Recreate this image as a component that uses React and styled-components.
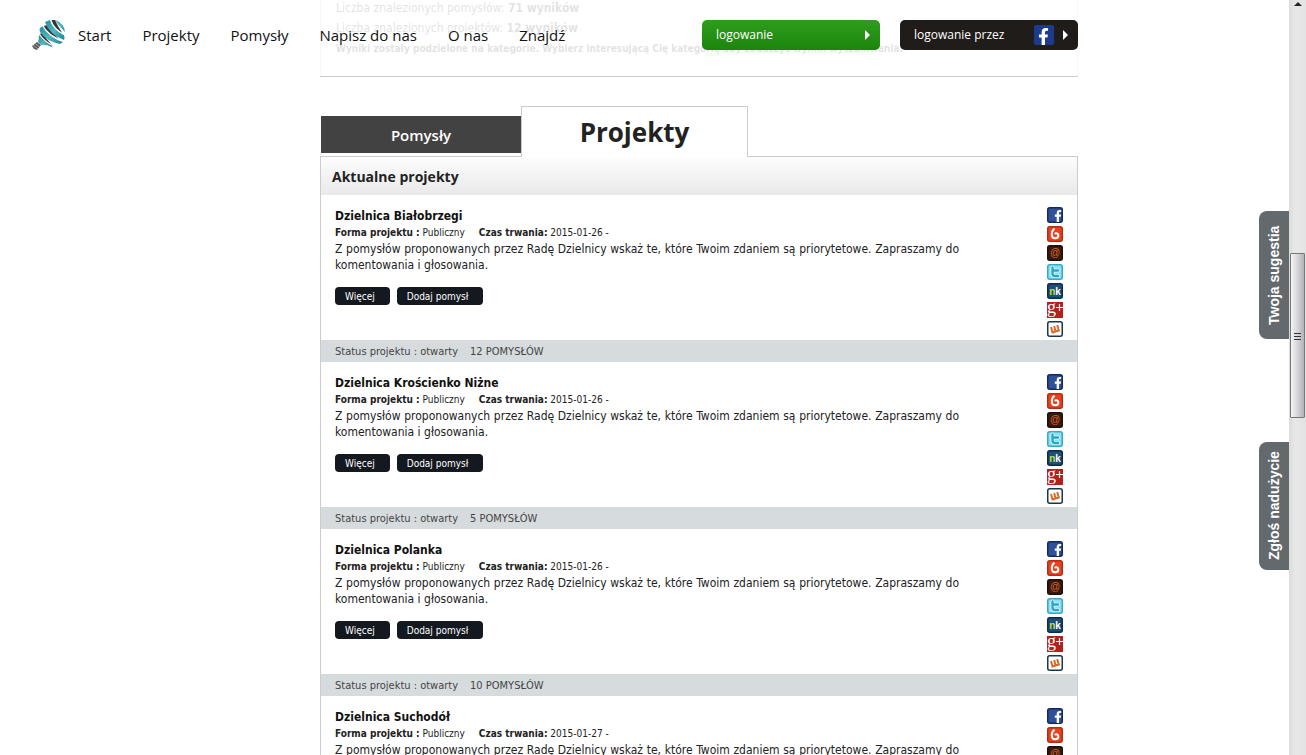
import React from "react";
import styled, { createGlobalStyle } from "styled-components";
import { FaFacebookF } from "react-icons/fa";

const sans = `"DejaVu Sans Condensed", "DejaVu Sans", sans-serif`;
const display = `"Open Sans", "Noto Sans", sans-serif`;

const GlobalStyle = createGlobalStyle`
	* {
		box-sizing: border-box;
	}
	body {
		margin: 0;
		background: #fff;
		color: #222;
		font: 12px/16px ${sans};
		overflow: hidden;
	}
	a {
		color: inherit;
		text-decoration: none;
	}
	button {
		border: 0;
		cursor: pointer;
	}
`;

const Window = styled.div`
	display: flex;
	height: 100vh;
	overflow: hidden;
`;

const Page = styled.div`
	position: relative;
	flex: 1;
	overflow: hidden;
`;

/* header */

const Header = styled.header`
	position: absolute;
	z-index: 2;
	top: 0;
	left: 0;
	right: 0;
	height: 76px;
	padding: 0 211px 6px 32px;
	display: flex;
	align-items: center;
	background: rgba(255, 255, 255, 0.85);
`;

const Logo = styled.a`
	display: block;
	width: 34px;
	height: 32px;
	margin-right: 12px;
`;

const Nav = styled.nav`
	flex: 1;
	display: flex;
	gap: 31px;
	font: 15px/20px ${display};
	color: #111;
	white-space: nowrap;
`;

const LoginButton = styled.button`
	width: 178px;
	height: 30px;
	margin-left: 20px;
	padding: 0 10px 0 14px;
	display: flex;
	align-items: center;
	gap: 9px;
	border-radius: 5px;
	background: ${props =>
		props.$green ? "linear-gradient(#2e9d1d, #1c850c)" : "#1f1c1a"};
	color: #fff;
	font: 12px/16px ${display};
	text-align: left;
`;

const LoginLabel = styled.span`
	flex: 1;
`;

const FacebookBadge = styled.span`
	display: flex;
	align-items: flex-end;
	justify-content: flex-end;
	width: 20px;
	height: 20px;
	padding-right: 2px;
	border-radius: 2px;
	background: #1c3b8f;
	font-size: 17px;
`;

/* content */

const Content = styled.main`
	margin: 0 211px 0 320px;
`;

const Summary = styled.section`
	height: 77px;
	padding-left: 15px;
	border: 1px solid #ccc;
	border-top: 0;
	color: #444;
`;

const SummaryLine = styled.p`
	margin: 0;
	height: 20px;
	line-height: 17px;
	font-size: ${props => (props.$small ? "10px" : "12px")};
	font-weight: ${props => (props.$small ? "bold" : "normal")};
	white-space: nowrap;
`;

const Tabs = styled.div`
	display: flex;
	align-items: flex-start;
	margin-top: 29px;
	padding-left: 1px;
`;

const Tab = styled.button`
	width: 200px;
	height: 37px;
	margin-top: 10px;
	background: #424242;
	color: #fff;
	font: 600 15px/20px ${display};
`;

const ActiveTab = styled.button`
	position: relative;
	width: 227px;
	height: 51px;
	margin-bottom: -1px;
	border: solid #ccc;
	border-width: 1px 1px 0;
	background: #fff;
	color: #222;
	font: bold 26px/32px ${display};
`;

const Panel = styled.section`
	border: 1px solid #ccc;
`;

const PanelTitle = styled.h2`
	margin: 0;
	height: 38px;
	padding: 10px 11px;
	background: linear-gradient(#fdfdfd, #e9e9ea);
	font: bold 14px/20px ${display};
`;

const Project = styled.article`
	height: 145px;
	padding: 12px 14px 0;
	display: flex;
	gap: 88px;
`;

const ProjectText = styled.div`
	flex: 1;
`;

const ProjectName = styled.h3`
	margin: 0;
	font-size: 12px;
	line-height: 18px;
	color: #111;
`;

const Meta = styled.div`
	display: flex;
	gap: 14px;
	font-size: 10px;
	line-height: 16px;
`;

const Description = styled.p`
	margin: 0 0 14px;
	text-align: justify;
`;

const Actions = styled.div`
	display: flex;
	gap: 7px;
`;

const Action = styled.button`
	height: 18px;
	padding: 1px 15px 0 10px;
	border-radius: 4px;
	background: #14181f;
	color: #fff;
	font: 10px/17px ${sans};
`;

const Shares = styled.div`
	display: flex;
	flex-direction: column;
	gap: 3px;
`;

const Share = styled.a`
	width: 16px;
	height: 16px;

	svg {
		display: block;
	}
`;

const Status = styled.div`
	display: flex;
	gap: 12px;
	padding: 2px 14px 0;
	background: #d6dcde;
	color: #444;
	font-size: 11px;
	line-height: 20px;
`;

/* right edge */

const SideTab = styled.a`
	position: absolute;
	top: ${props => props.$top}px;
	right: 0;
	width: 30px;
	height: 128px;
	border-radius: 0 8px 8px 0;
	background: #63696c;
	color: #fff;
	font: bold 14px/30px "Liberation Sans", Arial, sans-serif;
	text-align: center;
	writing-mode: vertical-rl;
	transform: rotate(180deg);
`;

const ScrollTrack = styled.div`
	width: 17px;
	padding: 2px 1px 0;
	display: flex;
	flex-direction: column;
	align-items: center;
	background: linear-gradient(90deg, #dcdcdc, #e8e8e8 40%, #e3e3e3);
`;

const ScrollArrow = styled.div`
	border: solid transparent;
	border-width: 0 4px 4px;
	border-bottom-color: #222;
`;

const ScrollThumb = styled.div`
	width: 15px;
	height: 165px;
	margin-top: 247px;
	display: flex;
	align-items: center;
	justify-content: center;
	border: 1px solid #777;
	border-radius: 1px;
	background: linear-gradient(90deg, #f4f4f4, #dcdce0 40%, #b2b2b8);
`;

const Bulb = () => (
	<svg width="34" height="32" viewBox="0 0 34 32" aria-hidden="true">
		<defs>
			<linearGradient id="teal" x1="0" y1="0" x2="1" y2="1">
				<stop offset="0" stopColor="#1f8f9b" />
				<stop offset="0.5" stopColor="#4fb9c1" />
				<stop offset="1" stopColor="#1c8591" />
			</linearGradient>
		</defs>
		<path d="M0 27 L5 23 L9 26 L5 31 L2 30Z" fill="#5c5a5e" />
		<path d="M1 26 L6 30 M3 24.500 L8 28" stroke="#a5a3a6" />
		<path d="M7 16 Q7 20 6 23 L9 26 Q14 25 20 28 L21 26 Q12 23 7 16Z" fill="url(#teal)" />
		<path d="M7 15 Q9 22 20 26 Q14 20 11 14Z" fill="#38363b" />
		<path d="M8 9 Q7 11 8 13 Q14 22 28 25 L31 23 Q17 19 11 7Z" fill="url(#teal)" />
		<path d="M11 7 Q15 16 27 20 Q19 12 16 6Z" fill="#38363b" />
		<path d="M13 3 L18 1 Q21 11 32 16 Q33 19 32 21 Q17 15 13 3Z" fill="url(#teal)" />
		<path d="M19 1 Q21 9 31 15 Q26 8 23 1Z" fill="#38363b" />
		<path d="M23 1 Q32 4 33 13 Q28 8 23 1Z" fill="url(#teal)" />
		<path
			d="M7 14.500 Q12 23 22 27 M10.500 6 Q15 16 31 22 M18.500 0 Q21 10 33 16"
			fill="none"
			stroke="#fff"
			strokeWidth="1.2"
		/>
	</svg>
);

const Arrow = () => (
	<svg width="5" height="10" viewBox="0 0 5 10" aria-hidden="true">
		<path d="M0 0 L5 5 L0 10Z" fill="#fff" />
	</svg>
);

const Tile = ({ fill, stroke, children }) => (
	<svg width="16" height="16" viewBox="0 0 16 16" aria-hidden="true">
		<rect
			x="0.75"
			y="0.75"
			width="14.5"
			height="14.5"
			rx="2"
			fill={fill}
			stroke={stroke}
			strokeWidth="1.5"
		/>
		{children}
	</svg>
);

const shares = [
	{
		name: "Facebook",
		icon: (
			<Tile fill="#30509a" stroke="#14285f">
				<FaFacebookF x="5" y="3" width="9" height="12" color="#fff" />
			</Tile>
		)
	},
	{
		name: "Blip",
		icon: (
			<Tile fill="#e8421f" stroke="#b82b10">
				<path
					d="M7.500 2.500 Q4.500 5 4.800 9 Q5.200 12.500 8.200 12.300 Q11.500 12 11.300 9.200 Q11 6.600 7.500 7.600"
					fill="none"
					stroke="#fff"
					strokeWidth="2"
				/>
			</Tile>
		)
	},
	{
		name: "E-mail",
		icon: (
			<Tile fill="#3a1a10" stroke="#1d0f0b">
				<text
					x="8"
					y="11"
					fontSize="10"
					fontFamily="Liberation Sans"
					textAnchor="middle"
					fill="#d9642a"
				>
					@
				</text>
			</Tile>
		)
	},
	{
		name: "Twitter",
		icon: (
			<Tile fill="#8be0f5" stroke="#36a9c8">
				<path
					d="M5.5 3.5 V9.5 Q5.5 12 8 12 H11 M5.5 6.5 H11"
					fill="none"
					stroke="#e8fafe"
					strokeWidth="4"
					strokeLinecap="round"
				/>
				<path
					d="M5.5 3.5 V9.5 Q5.5 12 8 12 H11 M5.5 6.5 H11"
					fill="none"
					stroke="#2ba5c9"
					strokeWidth="2.4"
					strokeLinecap="round"
				/>
			</Tile>
		)
	},
	{
		name: "Nasza Klasa",
		icon: (
			<Tile fill="#1c5078" stroke="#0d2a4c">
				<text
					x="8"
					y="12"
					fontSize="10"
					fontWeight="bold"
					fontFamily="Liberation Sans"
					textAnchor="middle"
					fill="#fff"
				>
					<tspan fill="#c8dc3c">n</tspan>k
				</text>
			</Tile>
		)
	},
	{
		name: "Google+",
		icon: (
			<svg width="16" height="16" viewBox="0 0 16 16" aria-hidden="true">
				<rect width="16" height="16" fill="#b3211c" />
				<text
					x="0"
					y="11"
					fontSize="18"
					fontFamily="Liberation Serif"
					fill="#fff"
				>
					g
				</text>
				<path d="M9 5.500 H16 M12.500 2 V9" stroke="#fff" strokeWidth="1.2" />
			</svg>
		)
	},
	{
		name: "Wykop",
		icon: (
			<Tile fill="#fff" stroke="#173650">
				<path
					d="M4 6 L5.5 11.5 L8.5 10.5 L7.2 5 M8.5 10.500 L11.800 9.500 L10.2 4"
					fill="none"
					stroke="#dd6a24"
					strokeWidth="2"
				/>
			</Tile>
		)
	}
];

const projects = [
	{ name: "Dzielnica Białobrzegi", date: "2015-01-26", ideas: 12 },
	{ name: "Dzielnica Krościenko Niżne", date: "2015-01-26", ideas: 5 },
	{ name: "Dzielnica Polanka", date: "2015-01-26", ideas: 10 },
	{ name: "Dzielnica Suchodół", date: "2015-01-27", ideas: 8 }
];

const links = [
	"Start",
	"Projekty",
	"Pomysły",
	"Napisz do nas",
	"O nas",
	"Znajdź"
];

const ProjectItem = ({ name, date, ideas }) => (
	<React.Fragment>
		<Project>
			<ProjectText>
				<ProjectName>{name}</ProjectName>
				<Meta>
					<span>
						<b>Forma projektu :</b> Publiczny
					</span>
					<span>
						<b>Czas trwania:</b> {date} -
					</span>
				</Meta>
				<Description>
					Z pomysłów proponowanych przez Radę Dzielnicy wskaż te, które Twoim
					zdaniem są priorytetowe. Zapraszamy do komentowania i głosowania.
				</Description>
				<Actions>
					<Action>Więcej</Action>
					<Action>Dodaj pomysł</Action>
				</Actions>
			</ProjectText>
			<Shares>
				{shares.map(share => (
					<Share key={share.name} href="#" aria-label={share.name}>
						{share.icon}
					</Share>
				))}
			</Shares>
		</Project>
		<Status>
			<span>Status projektu : otwarty</span>
			<span>{ideas} POMYSŁÓW</span>
		</Status>
	</React.Fragment>
);

const App = () => (
	<Window>
		<GlobalStyle />
		<Page>
			<Header>
				<Logo href="#" aria-label="Start">
					<Bulb />
				</Logo>
				<Nav>
					{links.map(link => (
						<a key={link} href="#">
							{link}
						</a>
					))}
				</Nav>
				<LoginButton $green>
					<LoginLabel>logowanie</LoginLabel>
					<Arrow />
				</LoginButton>
				<LoginButton>
					<LoginLabel>logowanie przez</LoginLabel>
					<FacebookBadge>
						<FaFacebookF />
					</FacebookBadge>
					<Arrow />
				</LoginButton>
			</Header>

			<Content>
				<Summary>
					<SummaryLine>
						Liczba znalezionych pomysłów: <b>71 wyników</b>
					</SummaryLine>
					<SummaryLine>
						Liczba znalezionych projektów: <b>12 wyników</b>
					</SummaryLine>
					<SummaryLine $small>
						Wyniki zostały podzielone na kategorie. Wybierz interesującą Cię
						kategorię aby zobaczyć wyniki wyszukiwania.
					</SummaryLine>
				</Summary>

				<Tabs>
					<Tab>Pomysły</Tab>
					<ActiveTab>Projekty</ActiveTab>
				</Tabs>
				<Panel>
					<PanelTitle>Aktualne projekty</PanelTitle>
					{projects.map(project => (
						<ProjectItem key={project.name} {...project} />
					))}
				</Panel>
			</Content>

			<SideTab href="#" $top={211}>
				Twoja sugestia
			</SideTab>
			<SideTab href="#" $top={442}>
				Zgłoś nadużycie
			</SideTab>
		</Page>
		<ScrollTrack>
			<ScrollArrow />
			<ScrollThumb>
				<svg width="7" height="8" viewBox="0 0 7 8" aria-hidden="true">
					<path d="M0 1.5 H7 M0 4.5 H7 M0 7.5 H7" stroke="#333" />
				</svg>
			</ScrollThumb>
		</ScrollTrack>
	</Window>
);

export default App;
